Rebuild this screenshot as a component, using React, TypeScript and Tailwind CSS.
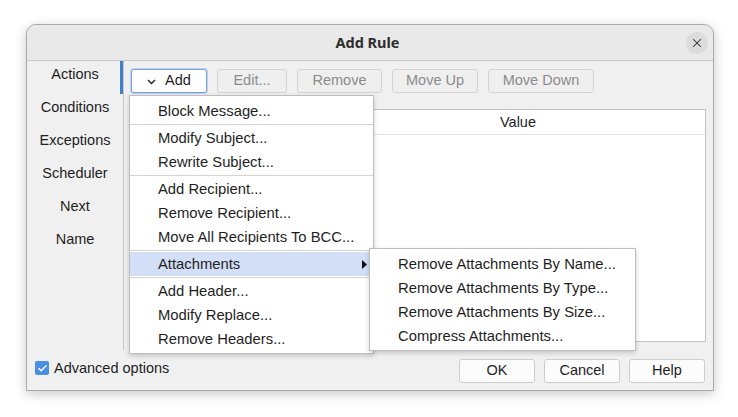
import { Check, X } from 'lucide-react';

const tabs = ['Actions', 'Conditions', 'Exceptions', 'Scheduler', 'Next', 'Name'];

const toolbar = [
    { label: 'Edit...', w: 'w-[70px]' },
    { label: 'Remove', w: 'w-[85px]' },
    { label: 'Move Up', w: 'w-[86px]' },
    { label: 'Move Down', w: 'w-[106px]' },
];

type MenuEntry = { label: string; sub?: boolean; active?: boolean } | 'sep';

const menu: MenuEntry[] = [
    { label: 'Block Message...' },
    'sep',
    { label: 'Modify Subject...' },
    { label: 'Rewrite Subject...' },
    'sep',
    { label: 'Add Recipient...' },
    { label: 'Remove Recipient...' },
    { label: 'Move All Recipients To BCC...' },
    'sep',
    { label: 'Attachments', sub: true, active: true },
    'sep',
    { label: 'Add Header...' },
    { label: 'Modify Replace...' },
    { label: 'Remove Headers...' },
];

const submenu = [
    'Remove Attachments By Name...',
    'Remove Attachments By Type...',
    'Remove Attachments By Size...',
    'Compress Attachments...',
];

function DialogButton({ label }: { label: string }) {
    return (
        <button className="w-[76px] h-[24px] rounded-[3px] border border-[#cdcdcd] bg-[#fcfcfc] text-[#1e1e1e]">
            {label}
        </button>
    )
}

export default function App() {
    return (
        <div className="w-[738px] h-[417px] bg-white pt-[24px] pl-[26px] font-['Liberation_Sans',Arial,sans-serif] text-[14.5px] text-[#1e1e1e]">
            <div className="relative w-[688px] h-[367px] flex flex-col rounded-t-[10px] border border-[#a9a9a9] bg-[#f0f0f0] shadow-[0_3px_12px_rgba(0,0,0,0.22)]">
                {/* title bar */}
                <div className="h-[36px] grid grid-cols-[1fr_auto_1fr] items-center rounded-t-[10px] bg-[#e9e9e9] border-b border-[#c9c9c9] pr-[5px]">
                    <span></span>
                    <h1 className="font-['Noto_Sans','DejaVu_Sans',sans-serif] font-bold text-[14.5px] text-[#2e2e2e] leading-none">Add Rule</h1>
                    <div className="flex justify-end">
                        <button className="w-[22px] h-[22px] rounded-full bg-[#dcdcdc] flex items-center justify-center text-[#2e2e2e]">
                            <X size={14} strokeWidth={1.8} />
                        </button>
                    </div>
                </div>

                {/* main */}
                <div className="h-[291px] flex">
                    <div className="w-[96px] flex flex-col">
                        {tabs.map((t, i) => (
                            <div
                                key={t}
                                className={`h-[33px] pt-[3px] text-center leading-[20px] ${i === 0 ? 'shadow-[inset_-3px_0_0_#3f7fcb]' : ''}`}
                            >
                                {t}
                            </div>
                        ))}
                    </div>
                    <div className="w-px mb-[2px] bg-[#c6c6c6]"></div>

                    <div className="flex-1 flex flex-col pt-[8px]">
                        <div className="flex gap-[10px] pl-[7px]">
                            <button className="w-[76px] h-[24px] flex items-center justify-center gap-[9px] rounded-[3px] border border-[#7aa3da] bg-white shadow-[0_0_0_1px_#bcd2ef] text-[#1e1e1e]">
                                <svg width="9" height="6" viewBox="0 0 9 6" className="mt-[1px]">
                                    <path d="M1 1l3.5 3.5L8 1" fill="none" stroke="#222" strokeWidth="1.4" />
                                </svg>
                                <span>Add</span>
                            </button>
                            {toolbar.map((b) => (
                                <button
                                    key={b.label}
                                    className={`${b.w} h-[24px] rounded-[3px] border border-[#d3d3d3] bg-[#efefef] text-[#8b8b8b]`}
                                >
                                    {b.label}
                                </button>
                            ))}
                        </div>

                        <div className="mt-[16px] ml-[6px] mr-[7px] h-[233px] border border-[#c3c3c3] bg-white">
                            <div className="h-[25px] flex border-b border-[#e3e3e3]">
                                <div className="w-[200px] border-r border-[#e3e3e3]"></div>
                                <div className="flex-1 text-center leading-[24px]">Value</div>
                            </div>
                        </div>
                    </div>
                </div>

                {/* bottom */}
                <div className="flex-1 flex items-start px-[8px]">
                    <label className="mt-[9px] flex items-center gap-[5px] leading-[14px]">
                        <span className="w-[14px] h-[14px] rounded-[2px] bg-[#4a8fe0] flex items-center justify-center text-white">
                            <Check size={11} strokeWidth={3} />
                        </span>
                        <span className="-mt-[1px]">Advanced options</span>
                    </label>
                    <div className="ml-auto mt-[7px] flex gap-[9px]">
                        <DialogButton label="OK" />
                        <DialogButton label="Cancel" />
                        <DialogButton label="Help" />
                    </div>
                </div>

                {/* dropdown menu */}
                <div className="absolute left-[102px] top-[70px] w-[245px] pt-[3px] pb-[2px] border border-[#bdbdbd] bg-white text-[14.8px] shadow-[0_2px_5px_rgba(0,0,0,0.18)]">
                    {menu.map((m, i) =>
                        m === 'sep' ? (
                            <div key={i} className="my-[1px] h-px bg-[#d4d4d4]"></div>
                        ) : (
                            <div
                                key={i}
                                className={`h-[24px] flex items-center pl-[28px] pr-[6px] ${m.active ? 'bg-[#d3dff6]' : ''}`}
                            >
                                <span className="flex-1">{m.label}</span>
                                {m.sub && (
                                    <svg width="5" height="9" viewBox="0 0 5 9">
                                        <path d="M0 0l5 4.5L0 9z" fill="#111" />
                                    </svg>
                                )}
                            </div>
                        )
                    )}
                </div>

                {/* submenu */}
                <div className="absolute left-[342px] top-[223px] w-[267px] pt-[3px] pb-[2px] border border-[#bdbdbd] bg-white text-[14.8px] shadow-[0_2px_5px_rgba(0,0,0,0.18)]">
                    {submenu.map((s) => (
                        <div key={s} className="h-[24px] flex items-center pl-[28px]">
                            {s}
                        </div>
                    ))}
                </div>
            </div>
        </div>
    )
}
